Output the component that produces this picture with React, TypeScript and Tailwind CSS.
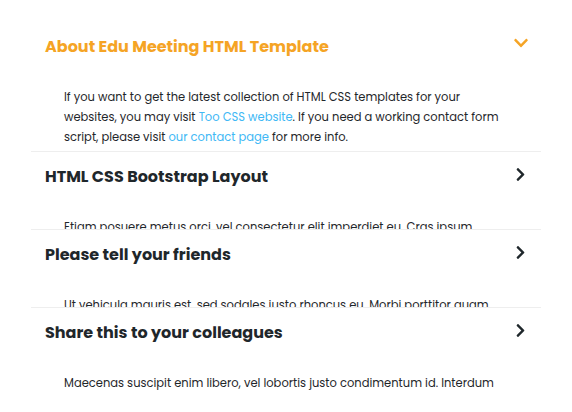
import React, { useState } from 'react';
import { FaChevronDown, FaChevronRight } from 'react-icons/fa';

type Item = {
    title: string;
    body: React.ReactNode;
};

const items: Item[] = [
    {
        title: 'About Edu Meeting HTML Template',
        body: (
            <>
                If you want to get the latest collection of HTML CSS templates for your
                <br />
                websites, you may visit <a className="text-[#40b8f5]">Too CSS website</a>. If you need a working contact form
                <br />
                script, please visit <a className="text-[#40b8f5]">our contact page</a> for more info.
            </>
        ),
    },
    {
        title: 'HTML CSS Bootstrap Layout',
        body: <>Etiam posuere metus orci, vel consectetur elit imperdiet eu. Cras ipsum</>,
    },
    {
        title: 'Please tell your friends',
        body: <>Ut vehicula mauris est, sed sodales justo rhoncus eu. Morbi porttitor quam</>,
    },
    {
        title: 'Share this to your colleagues',
        body: <>Maecenas suscipit enim libero, vel lobortis justo condimentum id. Interdum</>,
    },
];

export default function App() {
    const [open, setOpen] = useState<number>(0);

    return (
        <div className="w-[572px] h-[412px] overflow-hidden bg-white font-['Poppins','Inter','Liberation_Sans',sans-serif]">
            <div className="px-[31px] pt-[22px]">
                {items.map((item, index) => (
                    <div
                        key={`faq-${index}`}
                        className={
                            (index > 0 ? 'border-t border-[#eeeeee] ' : '') +
                            (open === index || index === items.length - 1 ? 'pb-[4px]' : 'h-[78px] overflow-hidden')
                        }
                    >
                        <button
                            onClick={() => setOpen(index)}
                            className="w-full h-[50px] flex items-center justify-between pl-[14px] pr-[13px] text-left"
                        >
                            <span
                                className={
                                    open === index
                                        ? 'text-[16px] font-bold text-[#f5a425]'
                                        : 'text-[16px] font-bold text-[#1f272b]'
                                }
                            >
                                {item.title}
                            </span>
                            {open === index ? (
                                <FaChevronDown className="w-[16px] h-[16px] -mt-[9px] -mr-[1px] text-[#f5a425]" />
                            ) : (
                                <FaChevronRight className="w-[15px] h-[15px] -mt-[5px] text-[#1f272b]" />
                            )}
                        </button>
                        <p className="pt-[15px] px-[33px] text-[11.5px] leading-[20px] text-[#1f272b] whitespace-nowrap">
                            {item.body}
                        </p>
                    </div>
                ))}
            </div>
        </div>
    );
}
